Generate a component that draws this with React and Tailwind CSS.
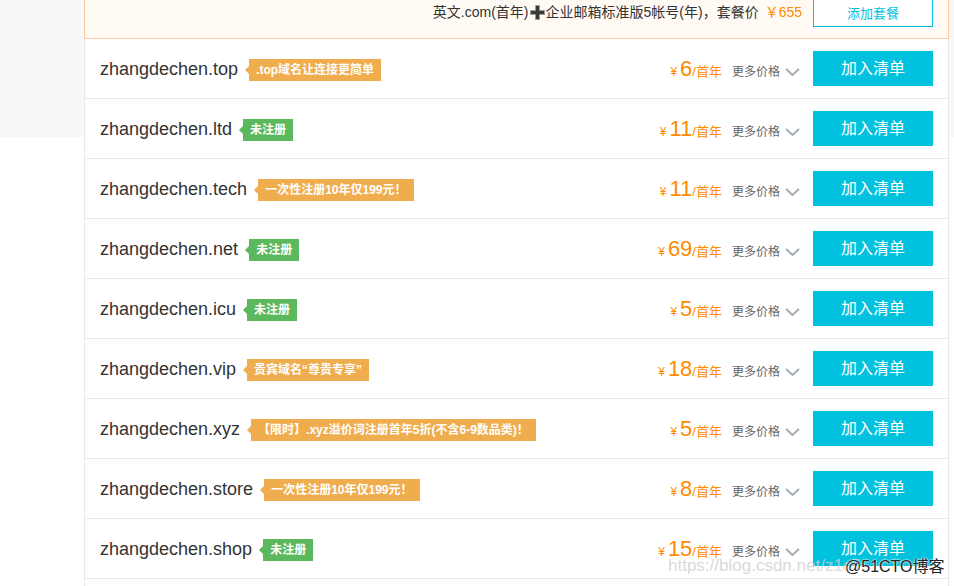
import React from "react"

const rows = [
  { name: "zhangdechen.top", tag: ".top域名让连接更简单", color: "orange", price: "6" },
  { name: "zhangdechen.ltd", tag: "未注册", color: "green", price: "11" },
  { name: "zhangdechen.tech", tag: "一次性注册10年仅199元！", color: "orange", price: "11" },
  { name: "zhangdechen.net", tag: "未注册", color: "green", price: "69" },
  { name: "zhangdechen.icu", tag: "未注册", color: "green", price: "5" },
  { name: "zhangdechen.vip", tag: "贵宾域名“尊贵专享”", color: "orange", price: "18" },
  { name: "zhangdechen.xyz", tag: "【限时】.xyz溢价词注册首年5折(不含6-9数品类)！", color: "orange", price: "5" },
  { name: "zhangdechen.store", tag: "一次性注册10年仅199元！", color: "orange", price: "8" },
  { name: "zhangdechen.shop", tag: "未注册", color: "green", price: "15" },
]

const Tag = ({ text, color }) => {
  const isGreen = color === "green"
  return (
    <span className="flex items-center ml-[7px] mt-[2px]">
      <span
        className={
          isGreen
            ? "w-0 h-0 border-y-[4px] border-y-transparent border-r-[4px] border-r-[#5cb85c]"
            : "w-0 h-0 border-y-[4px] border-y-transparent border-r-[4px] border-r-[#f0ad4e]"
        }
      />
      <span
        className={
          (isGreen ? "bg-[#5cb85c]" : "bg-[#f0ad4e]") +
          " h-[22px] px-[7px] flex items-center text-white text-[12px] font-bold leading-none"
        }
      >
        {text}
      </span>
    </span>
  )
}

const Chevron = () => (
  <svg width="15" height="9" viewBox="0 0 15 9" className="ml-[5px] mt-[2px]">
    <polyline points="1,1 7.5,7 14,1" fill="none" stroke="#a3abb3" strokeWidth="2" />
  </svg>
)

const HeavyPlus = () => (
  <svg width="15" height="15" viewBox="0 0 15 15" className="mx-[1px]">
    <path d="M5.5 0.5h4v5h5v4h-5v5h-4v-5h-5v-4h5z" fill="#3a3a3a" stroke="#9a9a9a" strokeWidth="1" />
  </svg>
)

const DomainRow = ({ row }) => (
  <div className="h-[60px] flex items-center border-x border-b border-[#e8e8e8] pl-[15px] pr-[15px]">
    <span className="text-[18px] text-[#333] leading-none">{row.name}</span>
    <Tag text={row.tag} color={row.color} />

    <div className="ml-auto flex items-baseline text-[#ff8a00] mt-[2px]">
      <span className="text-[12px] mr-[3px]">¥</span>
      <span className="text-[22px] leading-none">{row.price}</span>
      <span className="text-[13px]">/首年</span>
    </div>

    <div className="ml-[10px] mt-[6px] flex items-center text-[12px] text-[#666]">
      更多价格
      <Chevron />
    </div>

    <button className="ml-[13px] w-[120px] h-[35px] bg-[#00c1de] text-white text-[16px] flex items-center justify-center">
      加入清单
    </button>
  </div>
)

export default function App() {
  return (
    <div
      className="relative w-[954px] h-[586px] overflow-hidden bg-white flex"
      style={{ fontFamily: '"Liberation Sans", "Noto Sans CJK SC", sans-serif' }}
    >
      <div className="w-[84px] shrink-0">
        <div className="h-[137px] bg-[#f8f8f8]" />
      </div>

      <div className="w-[865px] shrink-0">
        {/* package bar */}
        <div className="h-[39px] flex justify-end items-start border-x border-b border-[#fcc9a5] bg-[#fffaf4] pr-[15px]">
          <div className="flex items-center mt-[4px] text-[14px] text-[#333] leading-[16px]">
            英文.com(首年)
            <HeavyPlus />
            企业邮箱标准版5帐号(年)，套餐价
            <span className="ml-[6px] text-[#ff8a00]">￥655</span>
          </div>
          <button className="ml-[11px] w-[120px] h-[27px] border border-t-0 border-[#00c1de] bg-white text-[#00c1de] text-[13px] pt-[2px]">
            添加套餐
          </button>
        </div>

        {rows.map((row) => (
          <DomainRow key={row.name} row={row} />
        ))}

        <div className="h-[30px] border-x border-[#e8e8e8]" />
      </div>

      <div className="flex-1">
        <div className="h-[137px] bg-[#f8f8f8]" />
      </div>

      {/* watermark */}
      <div className="absolute left-[668px] top-[557px] text-[17px] text-[#cfcfcf]/80 leading-none">
        https://blog.csdn.net/z1c5
      </div>
      <div className="absolute left-[845px] top-[559px] text-[16px] text-[#222] leading-none [text-shadow:0_0_2px_#fff,0_0_2px_#fff]">
        @51CTO博客
      </div>
    </div>
  )
}
